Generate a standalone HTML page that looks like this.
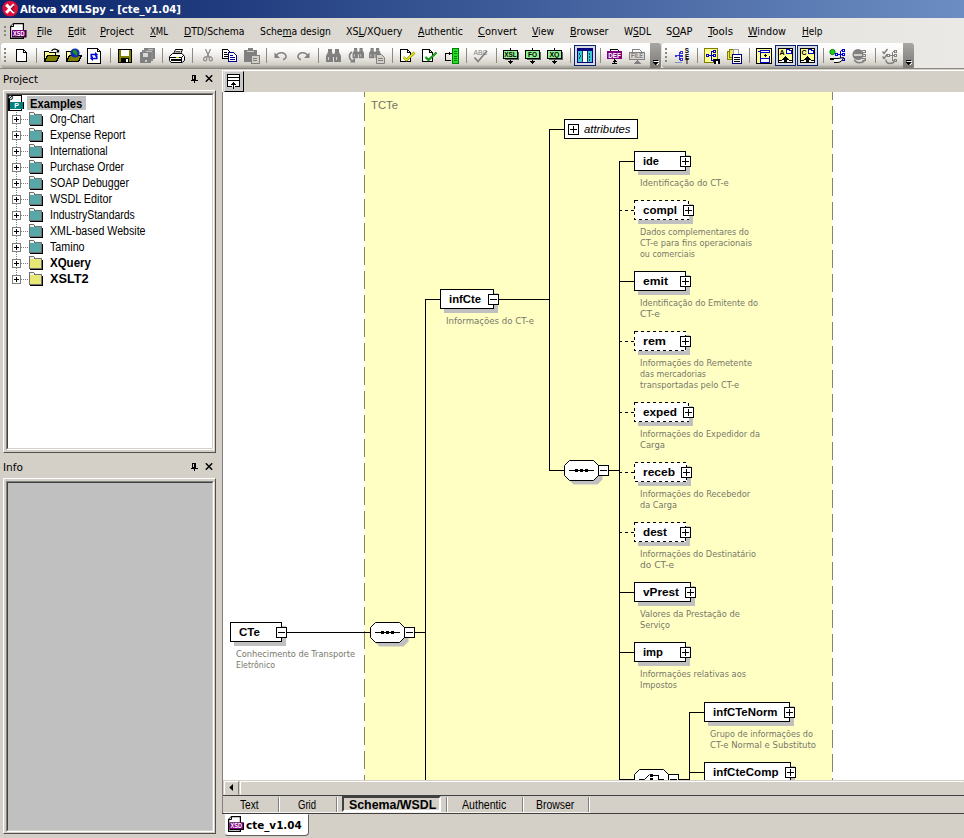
<!DOCTYPE html>
<html lang="en">
<head>
<meta charset="utf-8">
<title>Altova XMLSpy - [cte_v1.04]</title>
<style>
html,body{margin:0;padding:0}
body{width:964px;height:838px;position:relative;overflow:hidden;background:#d4d0c8;font-family:"Liberation Sans",sans-serif;font-size:12px;color:#000}
div,span,svg{position:absolute;white-space:nowrap;transform-origin:0 0}
#title{left:0;top:0;width:964px;height:18px;background:linear-gradient(90deg,#0a246a 0,#6c8dc3 964px)}
#title span{color:#fff;font-weight:bold;font-family:"DejaVu Sans Condensed","Liberation Sans",sans-serif;font-size:11px;line-height:14px}
#menu{left:0;top:18px;width:964px;height:25px;background:linear-gradient(90deg,#d4d0c8 0,#ebe9e5 964px)}
#menu span{font-family:"DejaVu Sans Condensed","Liberation Sans",sans-serif;font-size:10.5px;line-height:13px}
#menu u{text-decoration:underline}
#tb{left:0;top:43px;width:964px;height:26px;background:linear-gradient(90deg,#d4d0c8 0,#ebe9e5 964px)}
.tbar{top:0;height:25px;background:linear-gradient(180deg,#ffffff 0%,#fcfbfa 28%,#e4e1db 66%,#d2cfc7 86%,#b2afa8 94%,#9c9a94 100%);border-radius:3px 0 0 3px}
.sep{top:5px;width:1px;height:15px;background:#8d8a83}
.grip{top:5px;width:2px;height:15px;background:repeating-linear-gradient(180deg,#8a877f 0 2px,transparent 2px 4px)}
#hline{left:0;top:68px;width:964px;height:1px;background:#8a877f}
.ann{font-family:"DejaVu Sans Condensed","Liberation Sans",sans-serif;font-size:9.5px;line-height:11px;color:#77776a;white-space:pre}
.el{font-weight:bold;font-size:11px;line-height:13px;color:#000}
</style>
</head>
<body>

<!-- TITLE BAR -->
<div id="title">
<svg style="left:2px;top:0px" width="17" height="18" viewBox="0 0 17 18"><circle cx="8.2" cy="8.7" r="7.9" fill="#dc0f3a"/><path d="M4.2 4.6 L12.2 12.8 M4.2 12.8 L12.2 4.6" stroke="#fff" stroke-width="3" fill="none"/><path d="M12.6 5.6 L9.6 8.7 L12.6 11.8" stroke="#8c0020" stroke-width="1.5" fill="none"/></svg>
<span style="transform:scaleX(1.027);left:20px;top:3px;">Altova XMLSpy - [cte_v1.04]</span>
</div>

<!-- MENU BAR -->
<div id="menu">
<div class="grip" style="left:4px;top:7.5px;height:10px"></div>
<svg style="left:10px;top:5px" width="17" height="17" viewBox="0 0 17 17"><path d="M3.5 0.6 H13.4 V15.4 H0.6 V3.5 Z" fill="#fff" stroke="#000" stroke-width="1.2"/><path d="M3.5 0.6 V3.5 H0.6" fill="#d8c8e0" stroke="#000" stroke-width="1"/><rect x="2" y="7" width="14.5" height="7.5" fill="#000"/><rect x="2" y="7" width="13.5" height="6.5" fill="#800080"/><text x="8.7" y="12.8" font-family="Liberation Sans,sans-serif" font-size="7" font-weight="bold" fill="#fff" text-anchor="middle" style="position:static" textLength="11.5" lengthAdjust="spacingAndGlyphs">XSD</text></svg>
<span style="transform:scaleX(0.952);left:37px;top:7px;"><u>F</u>ile</span>
<span style="transform:scaleX(0.984);left:68px;top:7px;"><u>E</u>dit</span>
<span style="transform:scaleX(1.053);left:100px;top:7px;"><u>P</u>roject</span>
<span style="transform:scaleX(0.904);left:150px;top:7px;"><u>X</u>ML</span>
<span style="transform:scaleX(0.984);left:184px;top:7px;"><u>D</u>TD/Schema</span>
<span style="transform:scaleX(0.981);left:260px;top:7px;">Sche<u>m</u>a design</span>
<span style="transform:scaleX(1.007);left:346px;top:7px;">XS<u>L</u>/XQuery</span>
<span style="transform:scaleX(0.989);left:418px;top:7px;"><u>A</u>uthentic</span>
<span style="transform:scaleX(1.043);left:478px;top:7px;"><u>C</u>onvert</span>
<span style="transform:scaleX(0.982);left:532px;top:7px;"><u>V</u>iew</span>
<span style="transform:scaleX(1.006);left:570px;top:7px;"><u>B</u>rowser</span>
<span style="transform:scaleX(0.968);left:624px;top:7px;">W<u>S</u>DL</span>
<span style="transform:scaleX(1.043);left:666px;top:7px;">S<u>O</u>AP</span>
<span style="transform:scaleX(1.083);left:708px;top:7px;"><u>T</u>ools</span>
<span style="transform:scaleX(1.020);left:748px;top:7px;"><u>W</u>indow</span>
<span style="transform:scaleX(0.951);left:802px;top:7px;"><u>H</u>elp</span>
</div>

<!-- TOOLBARS -->
<div id="tb">
<div class="tbar" style="left:1px;width:650px"></div>
<div class="tbar" style="left:662px;width:242px"></div>
<div class="grip" style="left:4px"></div>
<svg style="left:16px;top:5px" width="16" height="17" viewBox="0 0 16 17" shape-rendering="crispEdges"><path d="M0.5 1.5 H7.5 L10.5 4.5 V13.5 H0.5 Z" fill="#fff" stroke="#000"/><path d="M7.5 1.5 V4.5 H10.5" fill="none" stroke="#000"/></svg>
<div class="sep" style="left:36px"></div>
<svg style="left:44px;top:5px" width="16" height="17" viewBox="0 0 16 17" shape-rendering="crispEdges"><path d="M0.5 13.5 V3.5 H4.5 L5.5 4.5 H11.5 V8" fill="#ffff99" stroke="#000"/><path d="M0.5 13.5 L3.5 7.5 H15.5 L12.5 13.5 Z" fill="#808000" stroke="#000"/><path d="M7.5 2.8 C9.5 0.3 13 0.5 14.3 3.6" fill="none" stroke="#000" stroke-width="1.2" shape-rendering="auto"/><path d="M15.2 1.2 V4.6 H11.8 Z" fill="#000" shape-rendering="auto"/></svg>
<svg style="left:66px;top:5px" width="16" height="17" viewBox="0 0 16 17" shape-rendering="crispEdges"><path d="M0.5 13.5 V3.5 H4.5 L5.5 4.5 H11.5 V8" fill="#ffff99" stroke="#000"/><path d="M0.5 13.5 L3.5 7.5 H15.5 L12.5 13.5 Z" fill="#808000" stroke="#000"/><circle cx="9" cy="5" r="4.6" fill="#1028b8" shape-rendering="auto"/><path d="M7 2.2 Q9.5 1 10.5 3 Q12.5 5 10.5 8 Q9.5 6 7.5 5.5 Q6 4 7 2.2 Z" fill="#189818" shape-rendering="auto"/></svg>
<svg style="left:87px;top:5px" width="16" height="17" viewBox="0 0 16 17" shape-rendering="crispEdges"><path d="M0.5 0.5 H10.5 L13.5 3.5 V15.5 H0.5 Z" fill="#fff" stroke="#000"/><path d="M10.5 0.5 V3.5 H13.5" fill="none" stroke="#000"/><path d="M4.2 9.5 V6.5 H8.5 M9.8 7.5 V10.5 H5.5" fill="none" stroke="#0000e0" stroke-width="1.5" shape-rendering="auto"/><path d="M8 4 L11 6.5 L8 9 Z M6 8 L3 10.5 L6 13 Z" fill="#0000e0" shape-rendering="auto"/></svg>
<div class="sep" style="left:110px"></div>
<svg style="left:118px;top:5px" width="16" height="17" viewBox="0 0 16 17" shape-rendering="crispEdges"><rect x="0.5" y="1.5" width="13" height="13" fill="#808000" stroke="#000"/><rect x="3" y="2" width="8" height="6" fill="#fff"/><rect x="3" y="10" width="8" height="5" fill="#000"/><rect x="8" y="11" width="2" height="3" fill="#fff"/></svg>
<svg style="left:140px;top:5px" width="16" height="17" viewBox="0 0 16 17" shape-rendering="crispEdges"><rect x="4" y="0" width="11" height="11" fill="#808080"/><rect x="2" y="2" width="11" height="11" fill="#8a8a8a" stroke="#a0a0a0" stroke-width="0"/><rect x="0" y="4" width="11" height="11" fill="#808080"/><rect x="3" y="5" width="5" height="4" fill="#d8d8d8"/><rect x="8" y="1" width="5" height="1" fill="#c0c0c0"/><rect x="6" y="3" width="6" height="1" fill="#c0c0c0"/><rect x="5" y="12" width="2" height="2" fill="#d0d0d0"/></svg>
<div class="sep" style="left:162px"></div>
<svg style="left:169px;top:5px" width="16" height="17" viewBox="0 0 16 17" shape-rendering="crispEdges"><path d="M4.5 6 L6.5 1.5 H13.5 L11.5 6" fill="#fff" stroke="#000" shape-rendering="auto"/><path d="M6.5 3.5 H11.5 M6 5 H11" stroke="#000" stroke-width=".7" shape-rendering="auto"/><path d="M0.5 8.5 L3.5 5.5 H13 L15.5 8.5 V12.5 L13 14.5 H2 L0.5 12.5 Z" fill="#fff" stroke="#000" shape-rendering="auto"/><path d="M1 9.5 H12.5 V14 M12.5 9.5 L15 7" fill="none" stroke="#000" shape-rendering="auto"/><rect x="2" y="11" width="10" height="2" fill="#000"/><rect x="7" y="9" width="3" height="1" fill="#c0d000"/></svg>
<div class="sep" style="left:192px"></div>
<svg style="left:202px;top:5px" width="16" height="17" viewBox="0 0 16 17"><path d="M3.5 1 L7 9 M8.5 1 L5 9 M5 9 Q3 8.5 2 10 Q1 12.5 3 13 Q5 13 5 9 M7 9 Q9 8.5 10 10 Q11 12.5 9 13 Q7 13 7 9" fill="none" stroke="#808080" stroke-width="1.1"/></svg>
<svg style="left:222px;top:5px" width="16" height="17" viewBox="0 0 16 17" shape-rendering="crispEdges"><path d="M0.5 1.5 H5.5 L8.5 4.5 V10.5 H0.5 Z" fill="#fff" stroke="#000"/><path d="M2 4.5 H5 M2 6.5 H7 M2 8.5 H7" stroke="#000"/><path d="M6.5 4.5 H11.5 L14.5 7.5 V13.5 H6.5 Z" fill="#fff" stroke="#000080"/><path d="M8 7.5 H11 M8 9.5 H13 M8 11.5 H13" stroke="#000080"/></svg>
<svg style="left:244px;top:5px" width="16" height="17" viewBox="0 0 16 17" shape-rendering="crispEdges"><rect x="0" y="2" width="13" height="12" rx="1" fill="#808080"/><rect x="4" y="0" width="5" height="3" fill="#808080"/><rect x="3" y="3" width="7" height="1" fill="#d4d0c8"/><rect x="7" y="7" width="8" height="8" fill="#d4d0c8" stroke="#808080"/><path d="M9 10.5 H13 M9 12.5 H13" stroke="#808080"/></svg>
<div class="sep" style="left:266px"></div>
<svg style="left:274px;top:5px" width="16" height="17" viewBox="0 0 16 17"><path d="M2 8 C4 3.5 11 3.5 12 8 C12.3 10 10.5 11.5 9 11.5" fill="none" stroke="#808080" stroke-width="1.5"/><path d="M0.5 4.5 V10 H6 Z" fill="#808080"/></svg>
<svg style="left:296px;top:5px" width="16" height="17" viewBox="0 0 16 17"><path d="M12 8 C10 3.5 3 3.5 2 8 C1.7 10 3.5 11.5 5 11.5" fill="none" stroke="#808080" stroke-width="1.5"/><path d="M13.5 4.5 V10 H8 Z" fill="#808080"/></svg>
<div class="sep" style="left:318px"></div>
<svg style="left:326px;top:5px" width="16" height="17" viewBox="0 0 16 17"><g transform="translate(0 1) scale(1.0)" fill="#808080"><rect x="2" y="0" width="4" height="3"/><rect x="9" y="0" width="4" height="3"/><path d="M2 3 H6 L7 6 V13 H0 V7 Z"/><path d="M9 3 H13 L15 7 V13 H8 V6 Z"/><rect x="6" y="5" width="3" height="3"/><rect x="2" y="8" width="1" height="3" fill="#d4d0c8"/><rect x="10" y="8" width="1" height="3" fill="#d4d0c8"/></g></svg>
<svg style="left:348px;top:5px" width="16" height="17" viewBox="0 0 16 17"><g transform="translate(4.5 0) scale(0.78)" fill="#808080"><rect x="2" y="0" width="4" height="3"/><rect x="9" y="0" width="4" height="3"/><path d="M2 3 H6 L7 6 V13 H0 V7 Z"/><path d="M9 3 H13 L15 7 V13 H8 V6 Z"/><rect x="6" y="5" width="3" height="3"/><rect x="2" y="8" width="1" height="3" fill="#d4d0c8"/><rect x="10" y="8" width="1" height="3" fill="#d4d0c8"/></g><path d="M4 4 C0.5 6 0.5 11 4.5 13" fill="none" stroke="#808080" stroke-width="1.6"/><path d="M2 14.5 H7 V9.5 Z" fill="#808080"/></svg>
<svg style="left:369px;top:5px" width="16" height="17" viewBox="0 0 16 17"><g transform="translate(0 0) scale(0.78)" fill="#808080"><rect x="2" y="0" width="4" height="3"/><rect x="9" y="0" width="4" height="3"/><path d="M2 3 H6 L7 6 V13 H0 V7 Z"/><path d="M9 3 H13 L15 7 V13 H8 V6 Z"/><rect x="6" y="5" width="3" height="3"/><rect x="2" y="8" width="1" height="3" fill="#d4d0c8"/><rect x="10" y="8" width="1" height="3" fill="#d4d0c8"/></g><path d="M7.5 6.5 H12.5 L15.5 9.5 V15.5 H7.5 Z" fill="#d4d0c8" stroke="#808080"/><path d="M9 10.5 H14 M9 12.5 H14" stroke="#808080"/></svg>
<div class="sep" style="left:392px"></div>
<svg style="left:400px;top:5px" width="16" height="17" viewBox="0 0 16 17" shape-rendering="crispEdges"><path d="M0.5 1.5 H7.5 L10.5 4.5 V13.5 H0.5 Z" fill="#fff" stroke="#000"/><path d="M7.5 1.5 V4.5 H10.5" fill="none" stroke="#000"/><path d="M3.5 9 L6.5 12 L14.5 4.5" fill="none" stroke="#808000" stroke-width="2.4" shape-rendering="auto"/><path d="M3.5 9 L6.5 12 L14.5 4.5" fill="none" stroke="#f8f820" stroke-width="1.1" shape-rendering="auto"/></svg>
<svg style="left:422px;top:5px" width="16" height="17" viewBox="0 0 16 17" shape-rendering="crispEdges"><path d="M0.5 1.5 H7.5 L10.5 4.5 V13.5 H0.5 Z" fill="#fff" stroke="#000"/><path d="M7.5 1.5 V4.5 H10.5" fill="none" stroke="#000"/><path d="M3.5 9 L6.5 12 L14.5 4.5" fill="none" stroke="#008000" stroke-width="2.2" shape-rendering="auto"/><path d="M3.5 9 L6.5 12 L14.5 4.5" fill="none" stroke="#30d030" stroke-width="0.8" shape-rendering="auto"/></svg>
<svg style="left:444px;top:5px" width="16" height="17" viewBox="0 0 16 17" shape-rendering="crispEdges"><path d="M7 5.5 H1.5 V12.5 H7" fill="none" stroke="#000" stroke-width="1.4"/><path d="M5 3.5 L7.5 5.5 L5 7.5 Z" fill="#000"/><rect x="8.5" y="0.5" width="6" height="15" fill="#20e020" stroke="#008000"/><path d="M10 3.5 H13 M10 5.5 H13 M10 8 H13 M10 10 H13 M10 12.5 H13" stroke="#008000"/></svg>
<div class="sep" style="left:466px"></div>
<svg style="left:473px;top:5px" width="16" height="17" viewBox="0 0 16 17"><text x="0.5" y="6.5" font-family="Liberation Sans,sans-serif" font-size="6.5" fill="#808080" style="position:static" textLength="14" lengthAdjust="spacingAndGlyphs">ABC</text><path d="M1.5 9.5 L5 13.5 L14 3" fill="none" stroke="#808080" stroke-width="1.8"/></svg>
<div class="sep" style="left:496px"></div>
<svg style="left:503px;top:5px" width="16" height="17" viewBox="0 0 16 17" shape-rendering="crispEdges"><path d="M7.5 0 V16" stroke="#000"/><path d="M4.5 13 H10.5 L7.5 16 Z" fill="#000"/><rect x="2" y="4" width="14" height="8" fill="#606060"/><rect x="0.5" y="2.5" width="14" height="8" fill="#90f090" stroke="#000"/><text x="7.5" y="9" font-family="Liberation Sans,sans-serif" font-size="8" font-weight="bold" fill="#000" text-anchor="middle" style="position:static" textLength="12.5" lengthAdjust="spacingAndGlyphs" shape-rendering="auto">XSL</text></svg>
<svg style="left:525px;top:5px" width="16" height="17" viewBox="0 0 16 17" shape-rendering="crispEdges"><path d="M7.5 0 V16" stroke="#000"/><path d="M4.5 13 H10.5 L7.5 16 Z" fill="#000"/><rect x="2" y="4" width="14" height="8" fill="#606060"/><rect x="0.5" y="2.5" width="14" height="8" fill="#90f090" stroke="#000"/><text x="7.5" y="9" font-family="Liberation Sans,sans-serif" font-size="8" font-weight="bold" fill="#000" text-anchor="middle" style="position:static" textLength="9" lengthAdjust="spacingAndGlyphs" shape-rendering="auto">FO</text></svg>
<svg style="left:547px;top:5px" width="16" height="17" viewBox="0 0 16 17" shape-rendering="crispEdges"><path d="M7.5 0 V16" stroke="#000"/><path d="M4.5 13 H10.5 L7.5 16 Z" fill="#000"/><rect x="2" y="4" width="14" height="8" fill="#606060"/><rect x="0.5" y="2.5" width="14" height="8" fill="#90f090" stroke="#000"/><text x="7.5" y="9" font-family="Liberation Sans,sans-serif" font-size="8" font-weight="bold" fill="#000" text-anchor="middle" style="position:static" textLength="10" lengthAdjust="spacingAndGlyphs" shape-rendering="auto">XQ</text></svg>
<div class="sep" style="left:570px"></div>
<div style="left:574px;top:2px;width:22px;height:21px;box-sizing:border-box;border:1px solid #0a246a;background:#d6d8e2"></div>
<svg style="left:577px;top:5px" width="16" height="17" viewBox="0 0 16 17" shape-rendering="crispEdges"><rect x="0.5" y="0.5" width="15" height="14" fill="#fff" stroke="#000080"/><rect x="1" y="1" width="14" height="2" fill="#000080"/><rect x="1" y="3" width="4" height="11" fill="#40c8d0"/><rect x="11" y="3" width="4" height="11" fill="#40c8d0"/><path d="M2.5 5 V7 M3.5 7 V9 M2.5 9 V11 M12.5 5 V7 M12.5 8 V10 M12.5 11 V13" stroke="#005070"/><rect x="5" y="3" width="1" height="11" fill="#203060"/><rect x="10" y="3" width="1" height="11" fill="#203060"/></svg>
<div class="sep" style="left:600px"></div>
<svg style="left:607px;top:5px" width="16" height="17" viewBox="0 0 16 17" shape-rendering="crispEdges"><path d="M3.5 5 V1.5 H10.5 L12.5 3.5 V5" fill="#fff" stroke="#000"/><rect x="0" y="3" width="15" height="8" fill="#800080"/><text x="7.5" y="9.7" font-family="Liberation Sans,sans-serif" font-size="7.5" font-weight="bold" fill="#fff" text-anchor="middle" style="position:static" textLength="12.5" lengthAdjust="spacingAndGlyphs">DEF</text><path d="M7.5 11 V16 M5 15.5 H10" stroke="#000"/><path d="M5.5 13.5 H9.5 L7.5 11.5 Z" fill="#000"/></svg>
<svg style="left:629px;top:5px" width="16" height="17" viewBox="0 0 16 17" shape-rendering="crispEdges"><path d="M3.5 5 V1.5 H10.5 L12.5 3.5 V5" fill="none" stroke="#808080"/><rect x="0.5" y="4.5" width="15" height="7" fill="#d8d6d0" stroke="#808080"/><text x="8" y="10.4" font-family="Liberation Sans,sans-serif" font-size="6.5" font-weight="bold" fill="#808080" text-anchor="middle" style="position:static" textLength="12" lengthAdjust="spacingAndGlyphs">FILE</text><path d="M8.5 12 V16 M5 15.5 H12" stroke="#808080"/><path d="M6 14.5 H11 L8.5 12 Z" fill="#808080"/></svg>
<div style="left:650px;top:0;width:11px;height:26px;background:linear-gradient(180deg,#a8a6a2 0%,#8c8a86 60%,#7a7874 100%);border-radius:0 3px 3px 0"></div><svg style="left:652px;top:16px" width="7" height="8" viewBox="0 0 7 8" shape-rendering="crispEdges"><path d="M1 1.5 H6" stroke="#000"/><path d="M1 3 H6 L3.5 6 Z" fill="#000"/><path d="M2 2.5 H7" stroke="#fff"/><path d="M4.5 6.5 L7 4" stroke="#fff" fill="none"/></svg>
<div class="grip" style="left:665px"></div>
<svg style="left:674px;top:5px" width="16" height="17" viewBox="0 0 16 17" shape-rendering="crispEdges"><g transform="translate(1 2) scale(.78)"><path d="M2.5 7.5 H5.5 M5.5 3.5 V12.5 M5.5 3.5 H7 M5.5 7.5 H7 M5.5 12.5 H7" fill="none" stroke="#0000d0"/><rect x="0.5" y="6.5" width="2" height="2" fill="#fff" stroke="#0000d0"/><rect x="7.5" y="2.5" width="2" height="2" fill="#fff" stroke="#0000d0"/><rect x="7.5" y="6.5" width="2" height="2" fill="#fff" stroke="#0000d0"/><rect x="7.5" y="11.5" width="2" height="2" fill="#fff" stroke="#0000d0"/></g><path d="M1 14.5 H8" stroke="#8090c0"/><text font-family="Liberation Sans,sans-serif" font-size="6.3" font-weight="bold" fill="#000" style="position:static" shape-rendering="auto"><tspan x="10.8" y="5">S</tspan><tspan x="11" y="10.5">E</tspan><tspan x="11" y="16">T</tspan></text></svg>
<div class="sep" style="left:697px"></div>
<svg style="left:704px;top:5px" width="16" height="17" viewBox="0 0 16 17" shape-rendering="crispEdges"><rect x="0.5" y="0.5" width="13" height="14" fill="#ffff90" stroke="#808000"/><g transform="translate(1.5 0)"><path d="M2.5 7.5 H5.5 M5.5 3.5 V12.5 M5.5 3.5 H7 M5.5 7.5 H7 M5.5 12.5 H7" fill="none" stroke="#0000c0"/><rect x="0.5" y="6.5" width="2" height="2" fill="#fff" stroke="#0000c0"/><rect x="7.5" y="2.5" width="2" height="2" fill="#fff" stroke="#0000c0"/><rect x="7.5" y="6.5" width="2" height="2" fill="#fff" stroke="#0000c0"/><rect x="7.5" y="11.5" width="2" height="2" fill="#fff" stroke="#0000c0"/></g><rect x="10" y="11" width="6" height="5" fill="#000"/><rect x="12" y="13" width="2" height="3" fill="#fff"/></svg>
<svg style="left:727px;top:5px" width="16" height="17" viewBox="0 0 16 17" shape-rendering="crispEdges"><rect x="0.5" y="3.5" width="8" height="8" fill="#e8e860" stroke="#808000"/><rect x="2.5" y="1.5" width="8" height="8" fill="#e8e860" stroke="#808000"/><rect x="6.5" y="1.5" width="5" height="5" fill="#fff" stroke="#a0a0a0"/><rect x="5.5" y="6.5" width="9" height="9" fill="#fff" stroke="#000080"/><path d="M7 9.5 H13 M7 11.5 H13 M7 13.5 H13" stroke="#000"/></svg>
<div class="sep" style="left:749px"></div>
<svg style="left:756px;top:5px" width="16" height="17" viewBox="0 0 16 17" shape-rendering="crispEdges"><rect x="0.5" y="0.5" width="15" height="15" fill="#ffff90" stroke="#000"/><rect x="4.5" y="2.5" width="9" height="2" fill="#fff" stroke="#0000c0"/><path d="M2 3.5 H4" stroke="#0000c0"/><path d="M4.5 5 V14.5 H13.5 V8 M4.5 10.5 H13.5" fill="none" stroke="#0000c0"/><rect x="5" y="11" width="8" height="3" fill="#fff"/><path d="M9.5 6 V9 M8 7.5 H11" stroke="#000"/></svg>
<div style="left:775px;top:2px;width:21px;height:21px;box-sizing:border-box;border:1px solid #0a246a;background:#d6d8e2"></div>
<svg style="left:778px;top:5px" width="16" height="17" viewBox="0 0 16 17" shape-rendering="crispEdges"><rect x="0" y="0" width="15" height="12" fill="#ffff90"/><rect x="0" y="12" width="15" height="3" fill="#fff"/><path d="M0.5 0 V15 M14.5 0 V15 M0 0.5 H15 M0 14.5 H15" stroke="#000"/><path d="M0 12.5 H4 M11 12.5 H15" stroke="#000"/><path d="M3.5 12 L7.5 8 L11.5 12 H9 V14 H6 V12 Z" fill="#000"/><path d="M8.5 1.5 H11 L12 2.5 H13.5 V5.5 H8.5 Z" fill="#fff" stroke="#0000c0"/><text x="1.5" y="7" font-family="Liberation Sans,sans-serif" font-size="7" font-weight="bold" fill="#000" style="position:static">A</text></svg>
<div style="left:797px;top:2px;width:21px;height:21px;box-sizing:border-box;border:1px solid #0a246a;background:#d6d8e2"></div>
<svg style="left:800px;top:5px" width="16" height="17" viewBox="0 0 16 17" shape-rendering="crispEdges"><rect x="0" y="0" width="15" height="12" fill="#ffff90"/><rect x="0" y="12" width="15" height="3" fill="#fff"/><path d="M0.5 0 V15 M14.5 0 V15 M0 0.5 H15 M0 14.5 H15" stroke="#000"/><path d="M0 12.5 H4 M11 12.5 H15" stroke="#000"/><path d="M3.5 12 L7.5 8 L11.5 12 H9 V14 H6 V12 Z" fill="#000"/><path d="M8.5 1.5 H11 L12 2.5 H13.5 V5.5 H8.5 Z" fill="#fff" stroke="#0000c0"/><text x="1.5" y="7" font-family="Liberation Sans,sans-serif" font-size="7" font-weight="bold" fill="#000" style="position:static">C</text></svg>
<div class="sep" style="left:823px"></div>
<svg style="left:829px;top:5px" width="16" height="17" viewBox="0 0 16 17" shape-rendering="crispEdges"><circle cx="3.5" cy="4" r="2.6" fill="#20d020" stroke="#008000" shape-rendering="auto"/><g transform="translate(6 -1)"><path d="M2.5 7.5 H5.5 M5.5 3.5 V12.5 M5.5 3.5 H7 M5.5 7.5 H7 M5.5 12.5 H7" fill="none" stroke="#0000d0"/><rect x="0.5" y="6.5" width="2" height="2" fill="#fff" stroke="#0000d0"/><rect x="7.5" y="2.5" width="2" height="2" fill="#fff" stroke="#0000d0"/><rect x="7.5" y="6.5" width="2" height="2" fill="#fff" stroke="#0000d0"/><rect x="7.5" y="11.5" width="2" height="2" fill="#fff" stroke="#0000d0"/></g><path d="M1 10 H5 V12 H1 Z" fill="#000"/><path d="M5 10.5 H9 Q12 10 14.5 9.5 Q13 14.5 8 14.5 H5" fill="#fff" stroke="#000" shape-rendering="auto"/></svg>
<svg style="left:852px;top:5px" width="16" height="17" viewBox="0 0 16 17" shape-rendering="crispEdges"><circle cx="6" cy="6.5" r="5.5" fill="#808080" shape-rendering="auto"/><rect x="2" y="5.5" width="8" height="2" fill="#d4d0c8"/><path d="M10 2.5 H13.5 V4.5 H10 M11 6.5 H13.5 V8.5 H11 M10 10.5 H13.5 V12.5 H10" fill="none" stroke="#808080"/><path d="M2 12 Q5 16 11 14 L13.5 11.5" fill="none" stroke="#808080" stroke-width="1.5" shape-rendering="auto"/></svg>
<div class="sep" style="left:875px"></div>
<svg style="left:882px;top:5px" width="16" height="17" viewBox="0 0 16 17" shape-rendering="crispEdges"><path d="M0.5 3.5 L2 5.5 L5.5 1 M0.5 8.5 L2 10.5 L5.5 6" fill="none" stroke="#808080" stroke-width="1.5" shape-rendering="auto"/><g transform="translate(5 0)"><path d="M2.5 7.5 H5.5 M5.5 3.5 V12.5 M5.5 3.5 H7 M5.5 7.5 H7 M5.5 12.5 H7" fill="none" stroke="#808080"/><rect x="0.5" y="6.5" width="2" height="2" fill="#fff" stroke="#808080"/><rect x="7.5" y="2.5" width="2" height="2" fill="#fff" stroke="#808080"/><rect x="7.5" y="6.5" width="2" height="2" fill="#fff" stroke="#808080"/><rect x="7.5" y="11.5" width="2" height="2" fill="#fff" stroke="#808080"/></g><path d="M4 11.5 Q4 15.5 8 15.5 Q12 15.5 13 12" fill="none" stroke="#808080" stroke-width="1.4" shape-rendering="auto"/></svg>
<div style="left:903px;top:0;width:11px;height:26px;background:linear-gradient(180deg,#a8a6a2 0%,#8c8a86 60%,#7a7874 100%);border-radius:0 3px 3px 0"></div><svg style="left:905px;top:16px" width="7" height="8" viewBox="0 0 7 8" shape-rendering="crispEdges"><path d="M1 1.5 H6" stroke="#000"/><path d="M1 3 H6 L3.5 6 Z" fill="#000"/><path d="M2 2.5 H7" stroke="#fff"/><path d="M4.5 6.5 L7 4" stroke="#fff" fill="none"/></svg>
</div>
<div id="hline"></div>

<!-- LEFT PANELS -->
<span style="transform:scaleX(1.084);left:3px;top:73px;font-family:'DejaVu Sans Condensed','Liberation Sans',sans-serif;font-size:10.5px;line-height:13px">Project</span>
<svg style="left:191px;top:75px" width="7" height="8" viewBox="0 0 7 8"><path d="M1.5 0.5 H4.5 V4.5 H1.5 Z M3.5 0.5 V4.5 M0 5.5 H7 M3 5.5 V8" fill="none" stroke="#000" stroke-width="1" shape-rendering="crispEdges"/><path d="M4 1 H5 V5 H4 Z" fill="#000"/></svg>
<svg style="left:205px;top:75px" width="8" height="7" viewBox="0 0 8 7"><path d="M0.8 0.3 L7.2 6.7 M7.2 0.3 L0.8 6.7" stroke="#000" stroke-width="1.5" fill="none"/></svg>
<div style="left:3px;top:90px;width:213px;height:363px;box-sizing:border-box;border:1px solid;border-color:#fff #505050 #505050 #fff"></div><div style="left:6px;top:93px;width:208px;height:357px;box-sizing:border-box;border:1px solid;border-color:#808080 #fff #fff #808080"></div><div style="left:7px;top:94px;width:206px;height:355px;box-sizing:border-box;border:1px solid;border-color:#404040 #d4d0c8 #d4d0c8 #404040;background:#fff"></div>
<div style="left:27px;top:96px;width:59px;height:14px;background:#c0c0c0"></div>
<svg style="left:8px;top:95px" width="17" height="17" viewBox="0 0 17 17" shape-rendering="crispEdges"><path d="M0.5 0.5 H13.5 V15.5 H0.5 Z" fill="#fff" stroke="#000"/><path d="M1.5 1 V15" stroke="#000"/><rect x="2" y="7" width="13" height="7" fill="#008080"/><path d="M15.5 7 V14" stroke="#000"/><circle cx="2.5" cy="2.5" r="2.2" fill="#c8d8d8" stroke="#000" stroke-width=".8" shape-rendering="auto"/><path d="M1 4 L4 1" stroke="#000" stroke-width=".8" shape-rendering="auto"/><text x="8.5" y="13.3" font-family="Liberation Sans,sans-serif" font-size="7" font-weight="bold" fill="#fff" text-anchor="middle" style="position:static">P</text></svg>
<span style="transform:scaleX(0.933);left:30px;top:97px;font-weight:bold;font-size:12px;line-height:15px">Examples</span>
<div style="left:16px;top:112px;width:1px;height:168px;background:repeating-linear-gradient(180deg,#808080 0 1px,transparent 1px 2px)"></div>
<div style="left:21px;top:119px;width:7px;height:1px;background:repeating-linear-gradient(90deg,#808080 0 1px,transparent 1px 2px)"></div>
<svg style="left:12px;top:115px" width="9" height="9" viewBox="0 0 9 9" shape-rendering="crispEdges"><rect x="0.5" y="0.5" width="8" height="8" fill="#fff" stroke="#808080"/><path d="M2 4.5 H7 M4.5 2 V7" stroke="#000"/></svg>
<svg style="left:28px;top:111px" width="16" height="15" viewBox="0 0 16 15" shape-rendering="crispEdges"><path d="M1.5 13.5 V1.5 H5.5 L6.5 3.5 H13.5 V13.5 Z" fill="#58a8a8" stroke="#707070"/><path d="M2 14.5 H14.5 V5" fill="none" stroke="#000"/><path d="M2 2.5 H5.5 M2 3.5 H6" stroke="#e8f0f0"/></svg>
<span style="transform:scaleX(0.834);left:50px;top:112px;font-size:12px;line-height:15px">Org-Chart</span>
<div style="left:21px;top:135px;width:7px;height:1px;background:repeating-linear-gradient(90deg,#808080 0 1px,transparent 1px 2px)"></div>
<svg style="left:12px;top:131px" width="9" height="9" viewBox="0 0 9 9" shape-rendering="crispEdges"><rect x="0.5" y="0.5" width="8" height="8" fill="#fff" stroke="#808080"/><path d="M2 4.5 H7 M4.5 2 V7" stroke="#000"/></svg>
<svg style="left:28px;top:127px" width="16" height="15" viewBox="0 0 16 15" shape-rendering="crispEdges"><path d="M1.5 13.5 V1.5 H5.5 L6.5 3.5 H13.5 V13.5 Z" fill="#58a8a8" stroke="#707070"/><path d="M2 14.5 H14.5 V5" fill="none" stroke="#000"/><path d="M2 2.5 H5.5 M2 3.5 H6" stroke="#e8f0f0"/></svg>
<span style="transform:scaleX(0.877);left:50px;top:128px;font-size:12px;line-height:15px">Expense Report</span>
<div style="left:21px;top:151px;width:7px;height:1px;background:repeating-linear-gradient(90deg,#808080 0 1px,transparent 1px 2px)"></div>
<svg style="left:12px;top:147px" width="9" height="9" viewBox="0 0 9 9" shape-rendering="crispEdges"><rect x="0.5" y="0.5" width="8" height="8" fill="#fff" stroke="#808080"/><path d="M2 4.5 H7 M4.5 2 V7" stroke="#000"/></svg>
<svg style="left:28px;top:143px" width="16" height="15" viewBox="0 0 16 15" shape-rendering="crispEdges"><path d="M1.5 13.5 V1.5 H5.5 L6.5 3.5 H13.5 V13.5 Z" fill="#58a8a8" stroke="#707070"/><path d="M2 14.5 H14.5 V5" fill="none" stroke="#000"/><path d="M2 2.5 H5.5 M2 3.5 H6" stroke="#e8f0f0"/></svg>
<span style="transform:scaleX(0.872);left:50px;top:144px;font-size:12px;line-height:15px">International</span>
<div style="left:21px;top:167px;width:7px;height:1px;background:repeating-linear-gradient(90deg,#808080 0 1px,transparent 1px 2px)"></div>
<svg style="left:12px;top:163px" width="9" height="9" viewBox="0 0 9 9" shape-rendering="crispEdges"><rect x="0.5" y="0.5" width="8" height="8" fill="#fff" stroke="#808080"/><path d="M2 4.5 H7 M4.5 2 V7" stroke="#000"/></svg>
<svg style="left:28px;top:159px" width="16" height="15" viewBox="0 0 16 15" shape-rendering="crispEdges"><path d="M1.5 13.5 V1.5 H5.5 L6.5 3.5 H13.5 V13.5 Z" fill="#58a8a8" stroke="#707070"/><path d="M2 14.5 H14.5 V5" fill="none" stroke="#000"/><path d="M2 2.5 H5.5 M2 3.5 H6" stroke="#e8f0f0"/></svg>
<span style="transform:scaleX(0.875);left:50px;top:160px;font-size:12px;line-height:15px">Purchase Order</span>
<div style="left:21px;top:183px;width:7px;height:1px;background:repeating-linear-gradient(90deg,#808080 0 1px,transparent 1px 2px)"></div>
<svg style="left:12px;top:179px" width="9" height="9" viewBox="0 0 9 9" shape-rendering="crispEdges"><rect x="0.5" y="0.5" width="8" height="8" fill="#fff" stroke="#808080"/><path d="M2 4.5 H7 M4.5 2 V7" stroke="#000"/></svg>
<svg style="left:28px;top:175px" width="16" height="15" viewBox="0 0 16 15" shape-rendering="crispEdges"><path d="M1.5 13.5 V1.5 H5.5 L6.5 3.5 H13.5 V13.5 Z" fill="#58a8a8" stroke="#707070"/><path d="M2 14.5 H14.5 V5" fill="none" stroke="#000"/><path d="M2 2.5 H5.5 M2 3.5 H6" stroke="#e8f0f0"/></svg>
<span style="transform:scaleX(0.886);left:50px;top:176px;font-size:12px;line-height:15px">SOAP Debugger</span>
<div style="left:21px;top:199px;width:7px;height:1px;background:repeating-linear-gradient(90deg,#808080 0 1px,transparent 1px 2px)"></div>
<svg style="left:12px;top:195px" width="9" height="9" viewBox="0 0 9 9" shape-rendering="crispEdges"><rect x="0.5" y="0.5" width="8" height="8" fill="#fff" stroke="#808080"/><path d="M2 4.5 H7 M4.5 2 V7" stroke="#000"/></svg>
<svg style="left:28px;top:191px" width="16" height="15" viewBox="0 0 16 15" shape-rendering="crispEdges"><path d="M1.5 13.5 V1.5 H5.5 L6.5 3.5 H13.5 V13.5 Z" fill="#58a8a8" stroke="#707070"/><path d="M2 14.5 H14.5 V5" fill="none" stroke="#000"/><path d="M2 2.5 H5.5 M2 3.5 H6" stroke="#e8f0f0"/></svg>
<span style="transform:scaleX(0.900);left:50px;top:192px;font-size:12px;line-height:15px">WSDL Editor</span>
<div style="left:21px;top:215px;width:7px;height:1px;background:repeating-linear-gradient(90deg,#808080 0 1px,transparent 1px 2px)"></div>
<svg style="left:12px;top:211px" width="9" height="9" viewBox="0 0 9 9" shape-rendering="crispEdges"><rect x="0.5" y="0.5" width="8" height="8" fill="#fff" stroke="#808080"/><path d="M2 4.5 H7 M4.5 2 V7" stroke="#000"/></svg>
<svg style="left:28px;top:207px" width="16" height="15" viewBox="0 0 16 15" shape-rendering="crispEdges"><path d="M1.5 13.5 V1.5 H5.5 L6.5 3.5 H13.5 V13.5 Z" fill="#58a8a8" stroke="#707070"/><path d="M2 14.5 H14.5 V5" fill="none" stroke="#000"/><path d="M2 2.5 H5.5 M2 3.5 H6" stroke="#e8f0f0"/></svg>
<span style="transform:scaleX(0.871);left:50px;top:208px;font-size:12px;line-height:15px">IndustryStandards</span>
<div style="left:21px;top:231px;width:7px;height:1px;background:repeating-linear-gradient(90deg,#808080 0 1px,transparent 1px 2px)"></div>
<svg style="left:12px;top:227px" width="9" height="9" viewBox="0 0 9 9" shape-rendering="crispEdges"><rect x="0.5" y="0.5" width="8" height="8" fill="#fff" stroke="#808080"/><path d="M2 4.5 H7 M4.5 2 V7" stroke="#000"/></svg>
<svg style="left:28px;top:223px" width="16" height="15" viewBox="0 0 16 15" shape-rendering="crispEdges"><path d="M1.5 13.5 V1.5 H5.5 L6.5 3.5 H13.5 V13.5 Z" fill="#58a8a8" stroke="#707070"/><path d="M2 14.5 H14.5 V5" fill="none" stroke="#000"/><path d="M2 2.5 H5.5 M2 3.5 H6" stroke="#e8f0f0"/></svg>
<span style="transform:scaleX(0.886);left:50px;top:224px;font-size:12px;line-height:15px">XML-based Website</span>
<div style="left:21px;top:247px;width:7px;height:1px;background:repeating-linear-gradient(90deg,#808080 0 1px,transparent 1px 2px)"></div>
<svg style="left:12px;top:243px" width="9" height="9" viewBox="0 0 9 9" shape-rendering="crispEdges"><rect x="0.5" y="0.5" width="8" height="8" fill="#fff" stroke="#808080"/><path d="M2 4.5 H7 M4.5 2 V7" stroke="#000"/></svg>
<svg style="left:28px;top:239px" width="16" height="15" viewBox="0 0 16 15" shape-rendering="crispEdges"><path d="M1.5 13.5 V1.5 H5.5 L6.5 3.5 H13.5 V13.5 Z" fill="#58a8a8" stroke="#707070"/><path d="M2 14.5 H14.5 V5" fill="none" stroke="#000"/><path d="M2 2.5 H5.5 M2 3.5 H6" stroke="#e8f0f0"/></svg>
<span style="transform:scaleX(0.894);left:50px;top:240px;font-size:12px;line-height:15px">Tamino</span>
<div style="left:21px;top:263px;width:7px;height:1px;background:repeating-linear-gradient(90deg,#808080 0 1px,transparent 1px 2px)"></div>
<svg style="left:12px;top:259px" width="9" height="9" viewBox="0 0 9 9" shape-rendering="crispEdges"><rect x="0.5" y="0.5" width="8" height="8" fill="#fff" stroke="#808080"/><path d="M2 4.5 H7 M4.5 2 V7" stroke="#000"/></svg>
<svg style="left:28px;top:255px" width="16" height="15" viewBox="0 0 16 15" shape-rendering="crispEdges"><path d="M1.5 13.5 V1.5 H5.5 L6.5 3.5 H13.5 V13.5 Z" fill="#e8e878" stroke="#707070"/><path d="M2 14.5 H14.5 V5" fill="none" stroke="#000"/><path d="M2 2.5 H5.5 M2 3.5 H6" stroke="#e8f0f0"/></svg>
<span style="transform:scaleX(0.958);left:50px;top:256px;font-weight:bold;font-size:12px;line-height:15px">XQuery</span>
<div style="left:21px;top:279px;width:7px;height:1px;background:repeating-linear-gradient(90deg,#808080 0 1px,transparent 1px 2px)"></div>
<svg style="left:12px;top:275px" width="9" height="9" viewBox="0 0 9 9" shape-rendering="crispEdges"><rect x="0.5" y="0.5" width="8" height="8" fill="#fff" stroke="#808080"/><path d="M2 4.5 H7 M4.5 2 V7" stroke="#000"/></svg>
<svg style="left:28px;top:271px" width="16" height="15" viewBox="0 0 16 15" shape-rendering="crispEdges"><path d="M1.5 13.5 V1.5 H5.5 L6.5 3.5 H13.5 V13.5 Z" fill="#e8e878" stroke="#707070"/><path d="M2 14.5 H14.5 V5" fill="none" stroke="#000"/><path d="M2 2.5 H5.5 M2 3.5 H6" stroke="#e8f0f0"/></svg>
<span style="transform:scaleX(1.062);left:50px;top:272px;font-weight:bold;font-size:12px;line-height:15px">XSLT2</span>
<span style="transform:scaleX(1.119);left:3px;top:461px;font-family:'DejaVu Sans Condensed','Liberation Sans',sans-serif;font-size:10.5px;line-height:13px">Info</span>
<svg style="left:191px;top:463px" width="7" height="8" viewBox="0 0 7 8"><path d="M1.5 0.5 H4.5 V4.5 H1.5 Z M3.5 0.5 V4.5 M0 5.5 H7 M3 5.5 V8" fill="none" stroke="#000" stroke-width="1" shape-rendering="crispEdges"/><path d="M4 1 H5 V5 H4 Z" fill="#000"/></svg>
<svg style="left:205px;top:463px" width="8" height="7" viewBox="0 0 8 7"><path d="M0.8 0.3 L7.2 6.7 M7.2 0.3 L0.8 6.7" stroke="#000" stroke-width="1.5" fill="none"/></svg>
<div style="left:3px;top:478px;width:213px;height:356px;box-sizing:border-box;border:1px solid;border-color:#fff #505050 #505050 #fff"></div><div style="left:6px;top:481px;width:208px;height:351px;box-sizing:border-box;border:1px solid;border-color:#808080 #fff #fff #808080"></div><div style="left:7px;top:482px;width:206px;height:349px;box-sizing:border-box;border:1px solid;border-color:#404040 #d4d0c8 #d4d0c8 #404040;background:#c0c0c0"></div>

<!-- MAIN -->
<div style="left:222px;top:70px;width:1px;height:22px;background:#fff"></div>
<div style="left:222px;top:70px;width:742px;height:1px;background:#fff"></div>
<div style="left:224px;top:71px;width:20px;height:21px;box-sizing:border-box;background:#c8c8c8;border:1px solid;border-color:#e0e0e0 #000 #000 #e0e0e0"></div>
<svg style="left:227px;top:74px" width="13" height="15" viewBox="0 0 13 15" shape-rendering="crispEdges"><path d="M0.5 0.5 H12.5 V12.5 H0.5 Z M0.5 3.5 H12.5 M0.5 6.5 H12.5" fill="#fff" stroke="#000"/><path d="M6.5 8 V15 M4 10.5 H9 M5 9.5 H8" stroke="#000" fill="none"/><rect x="5" y="12" width="3" height="1" fill="#fff"/><path d="M6.5 12 V15" stroke="#000"/></svg>
<div style="left:222px;top:92px;width:1px;height:722px;background:#808080"></div>
<div style="left:223px;top:92px;width:741px;height:688px;background:#fff"></div>
<div style="left:365px;top:92px;width:467px;height:688px;background:#ffffc4"></div>
<div style="left:364px;top:79px;width:1px;height:702px;background:repeating-linear-gradient(180deg,#85856c 0 18px,transparent 18px 24px);clip-path:inset(13px 0 1px 0)"></div>
<div style="left:832px;top:82px;width:1px;height:699px;background:repeating-linear-gradient(180deg,#85856c 0 18px,transparent 18px 24px);clip-path:inset(10px 0 1px 0)"></div>
<span style="transform:scaleX(1.027);left:371px;top:99px;font-size:11px;line-height:13px;color:#707064">TCTe</span>
<svg style="left:0;top:0" width="964" height="780" viewBox="0 0 964 780" fill="none" stroke="#000" stroke-width="1" shape-rendering="crispEdges"><rect x="234" y="626" width="52" height="20" fill="#c0c0c0" stroke="none"/><rect x="230.5" y="622.5" width="51" height="19" fill="#fff"/><rect x="276.5" y="627.5" width="10" height="10" fill="#fff"/><path d="M278 632.5 H285"/><path d="M287 632.5 H370"/><path d="M379.5 626.5 H403.5 L408.5 631.5 V641.5 L403.5 646.5 H379.5 L374.5 641.5 V631.5 Z" fill="#c0c0c0" stroke="none" shape-rendering="auto"/><path d="M375.5 622.5 H399.5 L404.5 627.5 V637.5 L399.5 642.5 H375.5 L370.5 637.5 V627.5 Z" fill="#fff" shape-rendering="auto"/><path d="M375 632.5 H400"/><rect x="381" y="631" width="3" height="3" fill="#000" stroke="none"/><rect x="386" y="631" width="3" height="3" fill="#000" stroke="none"/><rect x="391" y="631" width="3" height="3" fill="#000" stroke="none"/><rect x="404.5" y="627.5" width="10" height="10" fill="#fff"/><path d="M406 632.5 H413"/><path d="M415 632.5 H426"/><path d="M425.5 299 V781"/><path d="M426 299.5 H440"/><rect x="444" y="293" width="54" height="20" fill="#c0c0c0" stroke="none"/><rect x="440.5" y="289.5" width="53" height="19" fill="#fff"/><rect x="488.5" y="294.5" width="10" height="10" fill="#fff"/><path d="M490 299.5 H497"/><path d="M499 299.5 H549"/><path d="M549.5 129 V470"/><path d="M549 129.5 H564"/><rect x="564.5" y="119.5" width="73" height="19" fill="#fff"/><rect x="568.5" y="124.5" width="10" height="10" fill="#fff"/><path d="M570 129.5 H577 M573.5 126 V133"/><path d="M549 470.5 H564"/><path d="M573.5 464.5 H597.5 L602.5 469.5 V479.5 L597.5 484.5 H573.5 L568.5 479.5 V469.5 Z" fill="#c0c0c0" stroke="none" shape-rendering="auto"/><path d="M569.5 460.5 H593.5 L598.5 465.5 V475.5 L593.5 480.5 H569.5 L564.5 475.5 V465.5 Z" fill="#fff" shape-rendering="auto"/><path d="M569 470.5 H594"/><rect x="575" y="469" width="3" height="3" fill="#000" stroke="none"/><rect x="580" y="469" width="3" height="3" fill="#000" stroke="none"/><rect x="585" y="469" width="3" height="3" fill="#000" stroke="none"/><rect x="598.5" y="465.5" width="10" height="10" fill="#fff"/><path d="M600 470.5 H607"/><path d="M609 470.5 H619"/><path d="M619.5 161 V781"/><path d="M619 161.5 H634"/><rect x="638" y="155" width="52" height="20" fill="#c0c0c0" stroke="none"/><rect x="634.5" y="151.5" width="51" height="19" fill="#fff"/><rect x="680.5" y="156.5" width="10" height="10" fill="#fff"/><path d="M682 161.5 H689 M685.5 158 V165"/><path d="M619 210.5 H634" stroke-dasharray="3 3"/><rect x="638" y="204" width="55" height="20" fill="#c0c0c0" stroke="none"/><rect x="634.5" y="200.5" width="54" height="19" fill="#fff" stroke-dasharray="3 3"/><rect x="683.5" y="205.5" width="10" height="10" fill="#fff"/><path d="M685 210.5 H692 M688.5 207 V214"/><path d="M619 281.5 H634"/><rect x="638" y="275" width="52" height="20" fill="#c0c0c0" stroke="none"/><rect x="634.5" y="271.5" width="51" height="19" fill="#fff"/><rect x="680.5" y="276.5" width="10" height="10" fill="#fff"/><path d="M682 281.5 H689 M685.5 278 V285"/><path d="M619 341.5 H634" stroke-dasharray="3 3"/><rect x="638" y="335" width="52" height="20" fill="#c0c0c0" stroke="none"/><rect x="634.5" y="331.5" width="51" height="19" fill="#fff" stroke-dasharray="3 3"/><rect x="680.5" y="336.5" width="10" height="10" fill="#fff"/><path d="M682 341.5 H689 M685.5 338 V345"/><path d="M619 412.5 H634" stroke-dasharray="3 3"/><rect x="638" y="406" width="55" height="20" fill="#c0c0c0" stroke="none"/><rect x="634.5" y="402.5" width="54" height="19" fill="#fff" stroke-dasharray="3 3"/><rect x="683.5" y="407.5" width="10" height="10" fill="#fff"/><path d="M685 412.5 H692 M688.5 409 V416"/><path d="M619 472.5 H634" stroke-dasharray="3 3"/><rect x="638" y="466" width="53" height="20" fill="#c0c0c0" stroke="none"/><rect x="634.5" y="462.5" width="52" height="19" fill="#fff" stroke-dasharray="3 3"/><rect x="681.5" y="467.5" width="10" height="10" fill="#fff"/><path d="M683 472.5 H690 M686.5 469 V476"/><path d="M619 532.5 H634" stroke-dasharray="3 3"/><rect x="638" y="526" width="52" height="20" fill="#c0c0c0" stroke="none"/><rect x="634.5" y="522.5" width="51" height="19" fill="#fff" stroke-dasharray="3 3"/><rect x="680.5" y="527.5" width="10" height="10" fill="#fff"/><path d="M682 532.5 H689 M685.5 529 V536"/><path d="M619 592.5 H634"/><rect x="638" y="586" width="57" height="20" fill="#c0c0c0" stroke="none"/><rect x="634.5" y="582.5" width="56" height="19" fill="#fff"/><rect x="685.5" y="587.5" width="10" height="10" fill="#fff"/><path d="M687 592.5 H694 M690.5 589 V596"/><path d="M619 652.5 H634"/><rect x="638" y="646" width="52" height="20" fill="#c0c0c0" stroke="none"/><rect x="634.5" y="642.5" width="51" height="19" fill="#fff"/><rect x="680.5" y="647.5" width="10" height="10" fill="#fff"/><path d="M682 652.5 H689 M685.5 649 V656"/><path d="M619 779.5 H634"/><path d="M639.5 769.5 H663.5 L668.5 774.5 V790 H634.5 V774.5 Z" fill="#fff" shape-rendering="auto"/><path d="M639 779.5 H644.5 L649.5 774.5" fill="none" shape-rendering="auto"/><path d="M653 775.5 H658.5 V779.5 H664" fill="none"/><rect x="650" y="774" width="3" height="3" fill="#000" stroke="none"/><rect x="650" y="778" width="3" height="3" fill="#000" stroke="none"/><rect x="668.5" y="774.5" width="10" height="10" fill="#fff"/><path d="M670 779.5 H677"/><path d="M679 779.5 H689"/><path d="M689.5 712 V781"/><path d="M689 712.5 H704"/><rect x="708" y="706" width="86" height="20" fill="#c0c0c0" stroke="none"/><rect x="704.5" y="702.5" width="85" height="19" fill="#fff"/><rect x="784.5" y="707.5" width="10" height="10" fill="#fff"/><path d="M786 712.5 H793 M789.5 709 V716"/><path d="M689 772.5 H704"/><rect x="708" y="766" width="87" height="20" fill="#c0c0c0" stroke="none"/><rect x="704.5" y="762.5" width="86" height="19" fill="#fff"/><rect x="785.5" y="767.5" width="10" height="10" fill="#fff"/><path d="M787 772.5 H794 M790.5 769 V776"/></svg>
<span class="el" style="transform:scaleX(1.052);left:239px;top:626px;">CTe</span>
<span class="ann" style="transform:scaleX(0.965);left:236px;top:648px;">Conhecimento de Transporte</span>
<span class="ann" style="transform:scaleX(0.915);left:236px;top:659px;">Eletrônico</span>
<span class="el" style="transform:scaleX(1.027);left:449px;top:293px;">infCte</span>
<span class="ann" style="transform:scaleX(1.006);left:446px;top:315px;">Informações do CT-e</span>
<span class="el" style="transform:scaleX(1.028);left:584px;top:123px;font-style:italic;font-weight:normal">attributes</span>
<span class="el" style="transform:scaleX(1.006);left:643px;top:155px;">ide</span>
<span class="ann" style="transform:scaleX(0.990);left:640px;top:177px;">Identificação do CT-e</span>
<span class="el" style="transform:scaleX(1.049);left:643px;top:204px;">compl</span>
<span class="ann" style="transform:scaleX(0.948);left:640px;top:226px;">Dados complementares do</span>
<span class="ann" style="transform:scaleX(0.966);left:640px;top:237px;">CT-e para fins operacionais</span>
<span class="ann" style="transform:scaleX(0.927);left:640px;top:248px;">ou comerciais</span>
<span class="el" style="transform:scaleX(1.105);left:643px;top:275px;">emit</span>
<span class="ann" style="transform:scaleX(0.959);left:640px;top:297px;">Identificação do Emitente do</span>
<span class="ann" style="transform:scaleX(1.071);left:640px;top:308px;">CT-e</span>
<span class="el" style="transform:scaleX(1.139);left:643px;top:335px;">rem</span>
<span class="ann" style="transform:scaleX(0.967);left:640px;top:357px;">Informações do Remetente</span>
<span class="ann" style="transform:scaleX(0.931);left:640px;top:368px;">das mercadorias</span>
<span class="ann" style="transform:scaleX(0.969);left:640px;top:379px;">transportadas pelo CT-e</span>
<span class="el" style="transform:scaleX(1.069);left:643px;top:406px;">exped</span>
<span class="ann" style="transform:scaleX(0.958);left:640px;top:428px;">Informações do Expedidor da</span>
<span class="ann" style="transform:scaleX(0.991);left:640px;top:439px;">Carga</span>
<span class="el" style="transform:scaleX(1.090);left:643px;top:466px;">receb</span>
<span class="ann" style="transform:scaleX(0.962);left:640px;top:488px;">Informações do Recebedor</span>
<span class="ann" style="transform:scaleX(0.959);left:640px;top:499px;">da Carga</span>
<span class="el" style="transform:scaleX(1.061);left:643px;top:526px;">dest</span>
<span class="ann" style="transform:scaleX(0.957);left:640px;top:548px;">Informações do Destinatário</span>
<span class="ann" style="transform:scaleX(1.061);left:640px;top:559px;">do CT-e</span>
<span class="el" style="transform:scaleX(1.070);left:643px;top:586px;">vPrest</span>
<span class="ann" style="transform:scaleX(0.978);left:640px;top:608px;">Valores da Prestação de</span>
<span class="ann" style="transform:scaleX(0.950);left:640px;top:619px;">Serviço</span>
<span class="el" style="transform:scaleX(1.022);left:643px;top:646px;">imp</span>
<span class="ann" style="transform:scaleX(0.966);left:640px;top:668px;">Informações relativas aos</span>
<span class="ann" style="transform:scaleX(0.949);left:640px;top:679px;">Impostos</span>
<span class="el" style="transform:scaleX(1.038);left:713px;top:706px;">infCTeNorm</span>
<span class="ann" style="transform:scaleX(0.951);left:710px;top:728px;">Grupo de informações do</span>
<span class="ann" style="transform:scaleX(0.993);left:710px;top:739px;">CT-e Normal e Substituto</span>
<span class="el" style="transform:scaleX(1.051);left:713px;top:766px;">infCteComp</span>
<div style="left:223px;top:780px;width:741px;height:15px;background:#d4d0c8"></div>
<div style="left:224px;top:781px;width:15px;height:14px;box-sizing:border-box;border:1px solid;border-color:#fff #808080 #d4d0c8 #fff"></div>
<div style="left:240px;top:781px;width:724px;height:14px;box-sizing:border-box;border:1px solid;border-color:#fff #d4d0c8 #d4d0c8 #fff"></div>
<svg style="left:229px;top:784px" width="4" height="7" viewBox="0 0 4 7"><path d="M4 0 V7 L0.3 3.5 Z" fill="#000"/></svg>
<div style="left:223px;top:795px;width:741px;height:1px;background:#404040"></div>
<div style="left:278px;top:797px;width:1px;height:16px;background:#808080"></div><div style="left:279px;top:797px;width:1px;height:16px;background:#fff"></div>
<div style="left:336px;top:797px;width:1px;height:16px;background:#808080"></div><div style="left:337px;top:797px;width:1px;height:16px;background:#fff"></div>
<div style="left:446px;top:797px;width:1px;height:16px;background:#808080"></div><div style="left:447px;top:797px;width:1px;height:16px;background:#fff"></div>
<div style="left:522px;top:797px;width:1px;height:16px;background:#808080"></div><div style="left:523px;top:797px;width:1px;height:16px;background:#fff"></div>
<div style="left:588px;top:797px;width:1px;height:16px;background:#808080"></div><div style="left:589px;top:797px;width:1px;height:16px;background:#fff"></div>
<div style="left:342px;top:796px;width:99px;height:16px;box-sizing:border-box;border:2px solid;border-color:#404040 #fff #fff #404040"></div>
<span style="transform:scaleX(0.849);left:240px;top:798px;font-size:12px;line-height:15px;">Text</span>
<span style="transform:scaleX(0.794);left:298px;top:798px;font-size:12px;line-height:15px;">Grid</span>
<span style="transform:scaleX(1.030);left:349px;top:798px;font-size:12px;line-height:15px;font-weight:bold">Schema/WSDL</span>
<span style="transform:scaleX(0.883);left:462px;top:798px;font-size:12px;line-height:15px;">Authentic</span>
<span style="transform:scaleX(0.870);left:536px;top:798px;font-size:12px;line-height:15px;">Browser</span>
<div style="left:224px;top:812px;width:365px;height:1px;background:#f4f3f0"></div>
<div style="left:222px;top:813px;width:742px;height:1px;background:#404040"></div>
<div style="left:224px;top:814px;width:85px;height:22px;box-sizing:border-box;background:#fff;border:1px solid;border-color:#fff #606060 #606060 #d4d0c8;border-radius:0 0 4px 4px"></div>
<svg style="left:228px;top:816px" width="16" height="16" viewBox="0 0 16 16"><path d="M3.5 0.6 H12.4 V15.4 H0.6 V3.5 Z" fill="#fff" stroke="#000" stroke-width="1.2"/><path d="M3.5 0.6 V3.5 H0.6" fill="#d8c8e0" stroke="#000"/><rect x="1.5" y="6.5" width="14.5" height="7.5" fill="#000"/><rect x="1.5" y="6.5" width="13.5" height="6.5" fill="#800080"/><text x="8.2" y="12.3" font-family="Liberation Sans,sans-serif" font-size="7" font-weight="bold" fill="#fff" text-anchor="middle" style="position:static" textLength="11.5" lengthAdjust="spacingAndGlyphs">XSD</text></svg>
<span style="transform:scaleX(1.100);left:246px;top:819px;font-family:'DejaVu Sans Condensed','Liberation Sans',sans-serif;font-weight:bold;font-size:10.5px;line-height:13px">cte_v1.04</span>

</body>
</html>
